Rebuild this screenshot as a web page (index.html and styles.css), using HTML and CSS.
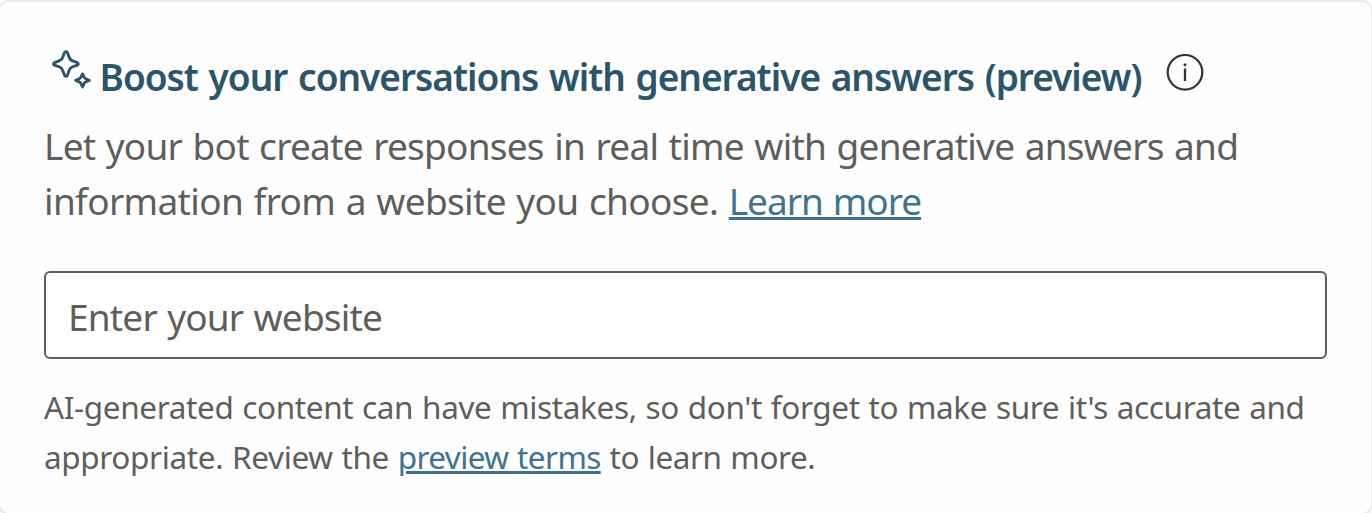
FILE: index.html
```html
<!DOCTYPE html>
<html lang="en">
<head>
<meta charset="utf-8">
<title>Generative answers</title>
<link rel="stylesheet" href="styles.css">
</head>
<body>
<section class="card">
  <header class="heading">
    <svg class="sparkle" width="42" height="42" viewBox="0 0 42 42" fill="none" stroke="currentColor" stroke-linejoin="round" aria-hidden="true">
      <path stroke-width="2.9" d="M14.5 2.5Q16 1 17.4 2.5Q18.5 5.200 19.300 7.500Q20 9.800 22.200 10.600L27.300 12.700Q29.300 13.900 27.300 15.200L22.200 17Q20 17.900 19.200 20.200L17.400 25.300Q16 27.200 14.600 25.300L12.600 20.200Q11.800 17.900 9.600 17L4.600 15.200Q2.400 13.900 4.600 12.600L9.600 10.600Q11.800 9.800 12.600 7.500Z"/>
      <path stroke-width="2.900" d="M32.500 23.900L34.200 27.300Q34.600 28.300 35.600 28.700L39.300 30.400L35.600 32Q34.600 32.400 34.200 33.400L32.500 37L30.800 33.400Q30.400 32.400 29.400 32L25.700 30.400L29.400 28.700Q30.400 28.300 30.800 27.300Z"/>
    </svg>
    <h1 class="title">Boost your conversations with generative answers (preview)</h1>
    <svg class="info" width="38" height="38" viewBox="0 0 38 38" aria-hidden="true">
      <circle cx="19" cy="19.300" r="17.300" fill="none" stroke="currentColor" stroke-width="2.200"/>
      <circle cx="19" cy="11.700" r="1.500" fill="currentColor"/>
      <rect x="17.850" y="15.500" width="2.300" height="12.500" fill="currentColor"/>
    </svg>
  </header>
  <p class="intro"><span class="intro-first">Let your bot create responses in real time with generative answers and</span><br><span class="intro-second">information from a website you choose. </span><a class="link learn" href="#">Learn more</a></p>
  <div class="field">Enter your website</div>
  <p class="note"><span class="note-first">AI-generated content can have mistakes, so don't forget to make sure it's accurate and</span><br><span class="note-second">appropriate. Review the </span><a class="link terms" href="#">preview terms</a><span class="note-end"> to learn more.</span></p>
</section>
</body>
</html>
```

FILE: styles.css
```css
html, body {
  height: 100%;
  overflow: hidden;
}
body {
  margin: 0;
  background: #fefefe;
  font-family: "Noto Sans", sans-serif;
  color: #5e5e5c;
}
.card {
  box-sizing: border-box;
  height: 515px;
  margin: 0 -1px 0 -2px;
  padding: 47px 44px 0;
  border: 2px solid #eaeaea;
  border-radius: 11px;
  background: #fefefe;
}
.heading {
  display: flex;
  align-items: flex-start;
  height: 54px;
  color: #2c5569;
}
.sparkle {
  flex: none;
  margin: 1px 0 0 6px;
}
.title {
  margin: 0 0 0 7.5px;
  font-size: 37px;
  font-weight: 600;
  line-height: 55px;
  letter-spacing: -0.98px;
  word-spacing: 2px;
  white-space: nowrap;
}
.info {
  flex: none;
  margin: 4px 0 0 24px;
  color: #333;
}
.intro {
  margin: 15px 0 0 0;
  font-size: 37px;
  line-height: 55px;
  word-spacing: 1.5px;
  white-space: nowrap;
}
.intro-first { letter-spacing: -0.75px; }
.intro-second { letter-spacing: -0.654px; }
.link {
  color: #3f738f;
  text-decoration: underline;
  text-decoration-thickness: 3px;
  text-underline-offset: 2px;
}
.learn { letter-spacing: -1.04px; }
.field {
  box-sizing: border-box;
  width: 1283px;
  height: 88px;
  margin-top: 43px;
  padding: 2px 22px 0;
  border: 2px solid #5e5e5e;
  border-radius: 6px;
  background: #fff;
  font-size: 37px;
  line-height: 83px;
  letter-spacing: -0.82px;
  word-spacing: 1.5px;
}
.note {
  margin: 23px 0 0 0;
  font-size: 31.5px;
  line-height: 50px;
  word-spacing: 1px;
  white-space: nowrap;
}
.note-first { letter-spacing: -0.372px; }
.note-second { letter-spacing: -0.367px; }
.terms { letter-spacing: -0.6px; }
.note-end { letter-spacing: -0.44px; }
```
